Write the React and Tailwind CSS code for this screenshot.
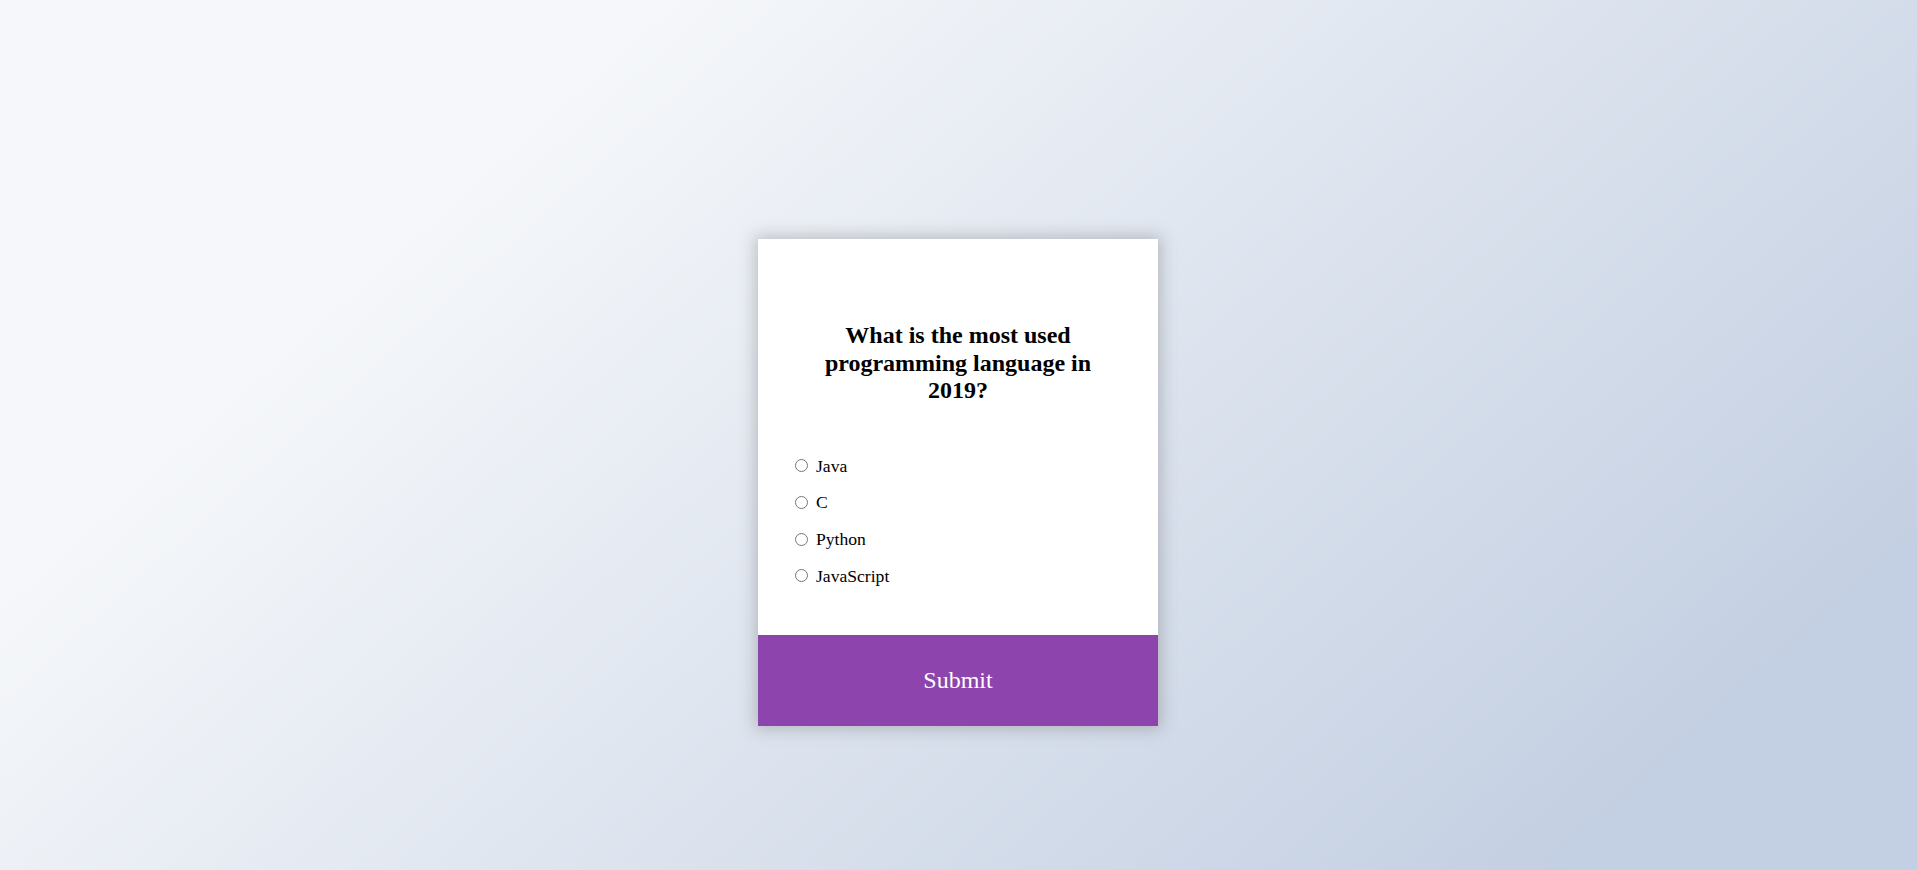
import React from 'react';

const answers = ['Java', 'C', 'Python', 'JavaScript'];

export default function App() {
  return (
    <div className="min-h-screen w-full flex justify-center items-start pt-[239px] pr-[1px] bg-[linear-gradient(138deg,#f5f7fa_23%,#c3cfe2_88%)] font-['Liberation_Serif',serif]">
      <div className="w-[400px] bg-white overflow-hidden shadow-[0_0_15px_3px_rgba(100,100,100,0.35)]">
        <div className="pt-[67px] pb-[33px]">
          <h2 className="px-12 pt-4 pb-4 text-center text-[24px] leading-[27.6px] font-bold text-black">
            What is the most used programming language in 2019?
          </h2>
          <ul className="mt-[35px] pl-[37px] flex flex-col gap-[16.4px] mb-[16px]">
            {answers.map((a) => (
              <li key={a} className="flex items-center h-[20.24px] text-[17.6px] text-black">
                <input type="radio" name="answer" id={a} className="m-0 w-[13px] h-[13px]" />
                <label htmlFor={a} className="ml-[8px] leading-[20.24px]">{a}</label>
              </li>
            ))}
          </ul>
        </div>
        <button className="flex items-center justify-center w-full h-[91px] bg-[#8e44ad] text-white text-[24px] leading-[27.6px] cursor-pointer font-['Liberation_Serif',serif]">
          Submit
        </button>
      </div>
    </div>
  );
}
